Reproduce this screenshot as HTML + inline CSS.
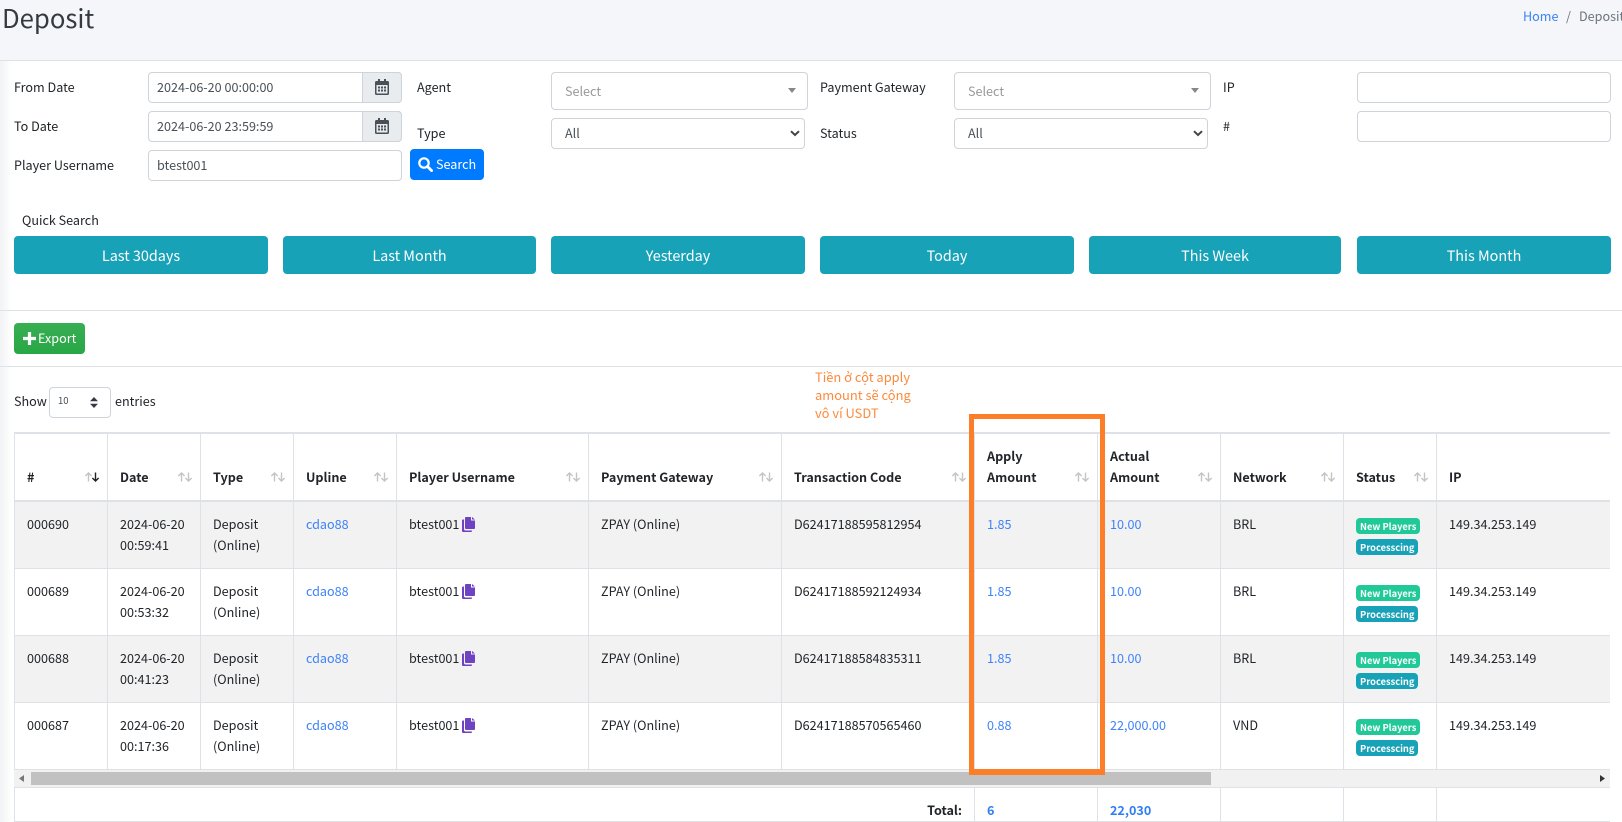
<!DOCTYPE html>
<html lang="en">
<head>
<meta charset="utf-8">
<title>Deposit</title>
<style>
html,body{margin:0;padding:0;width:1622px;height:822px;overflow:hidden;background:#fff;}
body{position:relative;font-family:"Noto Sans CJK JP","Noto Sans CJK SC","Liberation Sans",sans-serif;font-size:12.6px;color:#212529;line-height:21px;}
.hdr{position:absolute;left:0;top:0;width:1622px;height:60px;background:#f4f6f9;border-bottom:1px solid #dee2e6;}
.shade{position:absolute;left:0;top:61px;width:12px;height:761px;background:linear-gradient(90deg,#f2f3f5,#fff);}
.t{position:absolute;white-space:nowrap;line-height:21px;margin-top:-1px;}
.box{position:absolute;box-sizing:border-box;border:1px solid #ced4da;border-radius:4px;background:#fff;}
.val{color:#495057;}
.addon{position:absolute;box-sizing:border-box;left:362px;width:40px;height:31px;background:#e9ecef;border:1px solid #ced4da;border-radius:0 4px 4px 0;}
.qb{position:absolute;top:236px;height:38px;background:#17a2b8;border-radius:4px;color:#fff;font-size:14.4px;line-height:40px;text-align:center;}
.hr{position:absolute;left:0;width:1622px;height:1px;background:#dee2e6;}
.tw{position:absolute;left:14px;top:432px;width:1596px;height:338px;overflow:hidden;}
table{border-collapse:separate;border-spacing:0;table-layout:fixed;width:1596px;}
th,td{box-sizing:border-box;border-left:1px solid #dee2e6;padding:11px 12px 13px;font-size:12.6px;line-height:21px;text-align:left;vertical-align:top;font-weight:400;position:relative;}
td{white-space:nowrap;}
th{font-weight:700;vertical-align:bottom;border-top:2px solid #dee2e6;border-bottom:2px solid #dee2e6;height:70px;color:#212529;}
td{border-bottom:1px solid #dee2e6;height:67px;}
tr.s td{background:#f2f2f2;}
a{color:#3b82f6;text-decoration:none;}
td a{color:#3f83f8;}
.sort{position:absolute;right:8px;bottom:17px;width:14px;height:12px;}
.cp{display:inline-block;width:13px;height:15px;vertical-align:-3px;margin-left:0;}
.bd{display:inline-block;height:16px;line-height:16px;border-radius:4px;color:#fff;font-weight:700;font-size:9.3px;padding:0 4px;white-space:nowrap;position:absolute;left:12px;}
.g{background:#20c997;top:16px;}
.c{background:#17a2b8;top:37px;}
.sb{position:absolute;left:14px;top:770px;width:1596px;height:17px;background:#f1f1f1;}
.th{position:absolute;left:17px;top:2px;width:1180px;height:13px;background:#c1c1c1;}
.line{position:absolute;background:#dee2e6;}
.orange{position:absolute;box-sizing:border-box;left:969px;top:414px;width:136px;height:361px;border:5px solid #fd7e29;border-bottom-width:6px;}
</style>
</head>
<body>
<svg width="0" height="0" style="position:absolute">
<defs>
<symbol id="cal" viewBox="0 0 14 16"><path fill="#495057" d="M3 0h2v2h4V0h2v2h1.500A1.500 1.500 0 0 1 14 3.500v11a1.500 1.500 0 0 1-1.500 1.500h-11A1.500 1.500 0 0 1 0 14.500v-11A1.500 1.500 0 0 1 1.500 2H3zM1.500 6v8.200c0 .2.100.300.300.300h10.400c.2 0 .3-.1.3-.3V6zM3 7.500h2v2H3zm3 0h2v2H6zm3 0h2v2H9zm-6 3h2v2H3zm3 0h2v2H6zm3 0h2v2H9z"/></symbol>
<symbol id="copy" viewBox="0 0 13 15"><path fill="#6f42c1" d="M4 0h5v3.500h4V11a1 1 0 0 1-1 1H4a1 1 0 0 1-1-1V1a1 1 0 0 1 1-1zm6 0 3 2.500h-3zM0 3.500a1 1 0 0 1 1-1h1V12a1.500 1.500 0 0 0 1.500 1.500H10v.5a1 1 0 0 1-1 1H1a1 1 0 0 1-1-1z"/></symbol>
<symbol id="srt" viewBox="0 0 14 12"><path fill="none" stroke="#c4c4c4" stroke-width="1.400" d="M3.500 10.500V2M.4 5 3.500 2l3.100 3M10.500 1.500V10M7.400 7l3.100 3 3.100-3"/></symbol>
<symbol id="srta" viewBox="0 0 14 12"><path fill="none" stroke="#c4c4c4" stroke-width="1.400" d="M3.500 10.500V2M.4 5 3.500 2l3.100 3"/><path fill="none" stroke="#222" stroke-width="1.400" d="M10.500 1.500V10M7.400 7l3.100 3 3.100-3"/></symbol>
<symbol id="chev" viewBox="0 0 10 7"><path fill="none" stroke="#444" stroke-width="2" d="M1 1.200 5 5l4-3.800"/></symbol>
</defs>
</svg>

<div class="hdr"></div>
<div class="shade"></div>
<div class="t" style="left:2px;top:-1px;font-size:25.7px;line-height:40px;color:#343a40;">Deposit</div>
<a class="t" href="#" style="left:1523px;top:6px;color:#3b82f6;">Home</a>
<div class="t" style="left:1566px;top:6px;color:#6c757d;">/</div>
<div class="t" style="left:1579px;top:6px;color:#6c757d;">Deposit</div>

<div class="t" style="left:14px;top:77px;">From Date</div>
<div class="box" style="left:148px;top:72px;width:254px;height:31px;"></div>
<div class="t val" style="left:157px;top:77px;">2024-06-20 00:00:00</div>
<div class="addon" style="top:72px;"><svg style="position:absolute;left:12px;top:6px" width="14" height="16"><use href="#cal"/></svg></div>

<div class="t" style="left:14px;top:116px;">To Date</div>
<div class="box" style="left:148px;top:111px;width:254px;height:31px;"></div>
<div class="t val" style="left:157px;top:116px;">2024-06-20 23:59:59</div>
<div class="addon" style="top:111px;"><svg style="position:absolute;left:12px;top:6px" width="14" height="16"><use href="#cal"/></svg></div>

<div class="t" style="left:14px;top:155px;">Player Username</div>
<div class="box" style="left:148px;top:150px;width:254px;height:31px;"></div>
<div class="t val" style="left:157px;top:155px;">btest001</div>
<div style="position:absolute;left:410px;top:149px;width:74px;height:31px;background:#007bff;border-radius:4px;"></div>
<svg style="position:absolute;left:418px;top:157px" width="15" height="15" viewBox="0 0 15 15"><circle cx="6" cy="6" r="4.700" fill="none" stroke="#fff" stroke-width="2.200"/><path d="M9.500 9.500 13.600 13.600" stroke="#fff" stroke-width="2.800" stroke-linecap="round"/></svg>
<div class="t" style="left:436px;top:154px;color:#fff;">Search</div>

<div class="t" style="left:417px;top:77px;">Agent</div>
<div class="t" style="left:417px;top:123px;">Type</div>
<div class="box" style="left:551px;top:72px;width:257px;height:38px;"></div>
<div class="t" style="left:565px;top:81px;color:#999;">Select</div>
<svg style="position:absolute;left:788px;top:88px" width="8" height="5"><path d="M0 0h8L4 5z" fill="#888"/></svg>
<div class="box" style="left:551px;top:118px;width:254px;height:31px;"></div>
<div class="t val" style="left:565px;top:123px;">All</div>
<svg style="position:absolute;left:790px;top:130px" width="10" height="7"><use href="#chev"/></svg>

<div class="t" style="left:820px;top:77px;">Payment Gateway</div>
<div class="t" style="left:820px;top:123px;">Status</div>
<div class="box" style="left:954px;top:72px;width:257px;height:38px;"></div>
<div class="t" style="left:968px;top:81px;color:#999;">Select</div>
<svg style="position:absolute;left:1191px;top:88px" width="8" height="5"><path d="M0 0h8L4 5z" fill="#888"/></svg>
<div class="box" style="left:954px;top:118px;width:254px;height:31px;"></div>
<div class="t val" style="left:968px;top:123px;">All</div>
<svg style="position:absolute;left:1193px;top:130px" width="10" height="7"><use href="#chev"/></svg>

<div class="t" style="left:1223px;top:77px;">IP</div>
<div class="t" style="left:1223px;top:116px;">#</div>
<div class="box" style="left:1357px;top:72px;width:254px;height:31px;"></div>
<div class="box" style="left:1357px;top:111px;width:254px;height:31px;"></div>

<div class="t" style="left:22px;top:210px;">Quick Search</div>
<div class="qb" style="left:14px;width:254px;">Last 30days</div>
<div class="qb" style="left:283px;width:253px;">Last Month</div>
<div class="qb" style="left:551px;width:254px;">Yesterday</div>
<div class="qb" style="left:820px;width:254px;">Today</div>
<div class="qb" style="left:1089px;width:252px;">This Week</div>
<div class="qb" style="left:1357px;width:254px;">This Month</div>

<div class="hr" style="top:310px;"></div>
<div style="position:absolute;left:14px;top:323px;width:71px;height:31px;border-radius:4px;background:linear-gradient(180deg,#38ae53,#28a745);"></div>
<svg style="position:absolute;left:23px;top:332px" width="13" height="13" viewBox="0 0 13 13"><path d="M6.500 0v13M0 6.500h13" stroke="#fff" stroke-width="3.200"/></svg>
<div class="t" style="left:38px;top:328px;color:#fff;">Export</div>
<div class="hr" style="top:366px;"></div>

<div class="t" style="left:14px;top:391px;">Show</div>
<div class="box" style="left:49px;top:387px;width:62px;height:31px;"></div>
<div class="t val" style="left:58px;top:391px;font-size:9.5px;">10</div>
<svg style="position:absolute;left:90px;top:397px" width="8" height="11"><path d="M4 0 8 4.300H0zM4 11 0 6.700h8z" fill="#343a40"/></svg>
<div class="t" style="left:115px;top:391px;">entries</div>

<div class="t" style="left:815px;top:369px;color:#fd8a3c;line-height:18px;font-size:12.9px;">Tiền ở cột apply<br>amount sẽ cộng<br>vô ví USDT</div>

<div class="tw">
<table>
<colgroup>
<col style="width:93px"><col style="width:93px"><col style="width:93px"><col style="width:103px"><col style="width:192px"><col style="width:193px"><col style="width:193px"><col style="width:123px"><col style="width:123px"><col style="width:123px"><col style="width:93px"><col style="width:174px">
</colgroup>
<thead><tr>
<th># <svg class="sort"><use href="#srta"/></svg></th>
<th>Date<svg class="sort"><use href="#srt"/></svg></th>
<th>Type<svg class="sort"><use href="#srt"/></svg></th>
<th>Upline<svg class="sort"><use href="#srt"/></svg></th>
<th>Player Username<svg class="sort"><use href="#srt"/></svg></th>
<th>Payment Gateway<svg class="sort"><use href="#srt"/></svg></th>
<th>Transaction Code<svg class="sort"><use href="#srt"/></svg></th>
<th>Apply<br>Amount<svg class="sort"><use href="#srt"/></svg></th>
<th>Actual<br>Amount<svg class="sort"><use href="#srt"/></svg></th>
<th>Network<svg class="sort"><use href="#srt"/></svg></th>
<th>Status<svg class="sort"><use href="#srt"/></svg></th>
<th>IP</th>
</tr></thead>
<tbody>
<tr class="s"><td>000690</td><td>2024-06-20<br>00:59:41</td><td>Deposit<br>(Online)</td><td><a href="#">cdao88</a></td><td>btest001 <svg class="cp" width="13" height="15"><use href="#copy"/></svg></td><td>ZPAY (Online)</td><td>D62417188595812954</td><td><a href="#">1.85</a></td><td><a href="#">10.00</a></td><td>BRL</td><td><span class="bd g">New Players</span><span class="bd c">Processcing</span></td><td>149.34.253.149</td></tr>
<tr><td>000689</td><td>2024-06-20<br>00:53:32</td><td>Deposit<br>(Online)</td><td><a href="#">cdao88</a></td><td>btest001 <svg class="cp" width="13" height="15"><use href="#copy"/></svg></td><td>ZPAY (Online)</td><td>D62417188592124934</td><td><a href="#">1.85</a></td><td><a href="#">10.00</a></td><td>BRL</td><td><span class="bd g">New Players</span><span class="bd c">Processcing</span></td><td>149.34.253.149</td></tr>
<tr class="s"><td>000688</td><td>2024-06-20<br>00:41:23</td><td>Deposit<br>(Online)</td><td><a href="#">cdao88</a></td><td>btest001 <svg class="cp" width="13" height="15"><use href="#copy"/></svg></td><td>ZPAY (Online)</td><td>D62417188584835311</td><td><a href="#">1.85</a></td><td><a href="#">10.00</a></td><td>BRL</td><td><span class="bd g">New Players</span><span class="bd c">Processcing</span></td><td>149.34.253.149</td></tr>
<tr><td>000687</td><td>2024-06-20<br>00:17:36</td><td>Deposit<br>(Online)</td><td><a href="#">cdao88</a></td><td>btest001 <svg class="cp" width="13" height="15"><use href="#copy"/></svg></td><td>ZPAY (Online)</td><td>D62417188570565460</td><td><a href="#">0.88</a></td><td><a href="#">22,000.00</a></td><td>VND</td><td><span class="bd g">New Players</span><span class="bd c">Processcing</span></td><td>149.34.253.149</td></tr>
</tbody>
</table>
</div>

<div class="sb"><div class="th"></div>
<svg style="position:absolute;left:5px;top:5px" width="5" height="7"><path d="M5 0v7L0 3.500z" fill="#777"/></svg>
<svg style="position:absolute;left:1586px;top:5px" width="5" height="7"><path d="M0 0v7l5-3.500z" fill="#333"/></svg>
</div>

<div class="line" style="left:14px;top:787px;width:1596px;height:1px;"></div>
<div class="line" style="left:14px;top:821px;width:1596px;height:1px;"></div>
<div class="line" style="left:14px;top:788px;width:1px;height:33px;"></div>
<div class="line" style="left:974px;top:788px;width:1px;height:33px;"></div>
<div class="line" style="left:1097px;top:788px;width:1px;height:33px;"></div>
<div class="line" style="left:1220px;top:788px;width:1px;height:33px;"></div>
<div class="line" style="left:1343px;top:788px;width:1px;height:33px;"></div>
<div class="line" style="left:1436px;top:788px;width:1px;height:33px;"></div>
<div class="t" style="left:900px;width:62px;text-align:right;top:800px;font-weight:700;">Total:</div>
<div class="t" style="left:987px;top:800px;font-weight:700;color:#2f7ef5;">6</div>
<div class="t" style="left:1110px;top:800px;font-weight:700;color:#2f7ef5;">22,030</div>

<div class="orange"></div>
</body>
</html>
